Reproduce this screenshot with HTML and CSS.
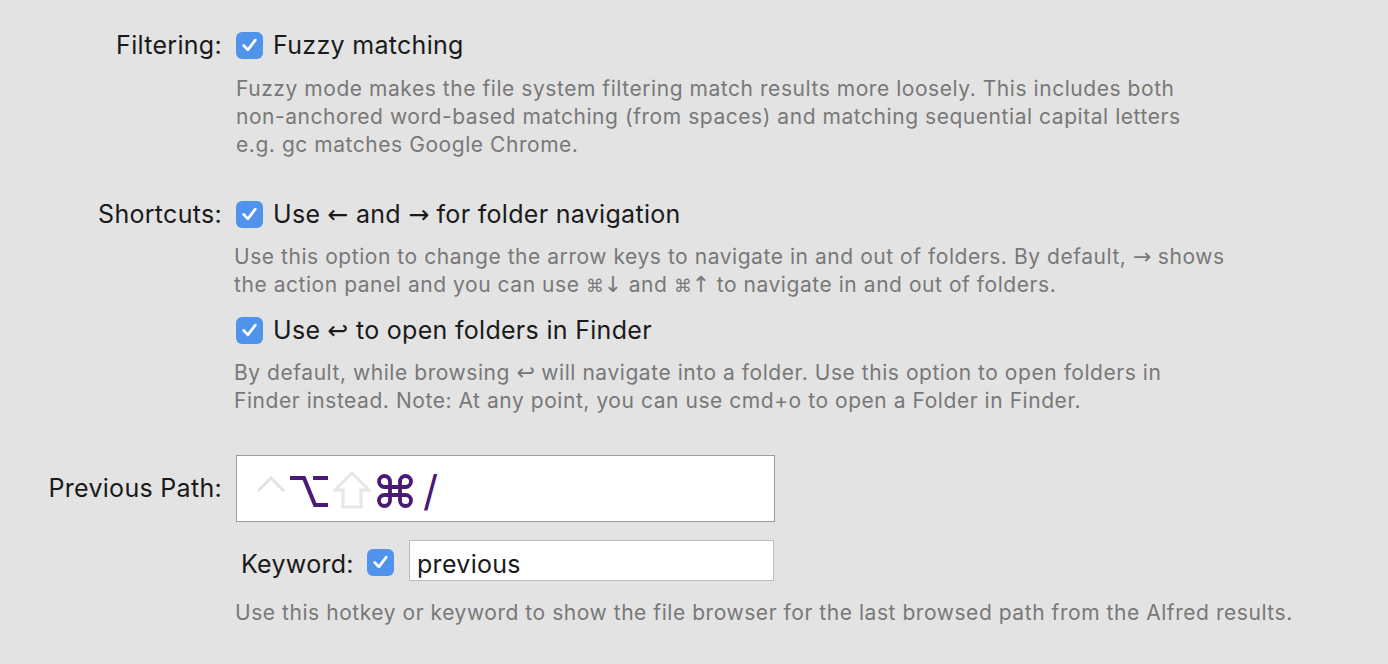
FILE: index.html
```html
<!DOCTYPE html>
<html>
<head>
<meta charset="utf-8">
<link rel="stylesheet" href="styles.css">
</head>
<body>
<div class="prefs">
  <div class="section s-filter">
    <div class="label">Filtering:</div>
    <div class="content">
      <div class="check-row">
        <span class="checkbox"><svg viewBox="0 0 28 28" width="28" height="28"><path d="M8 14.5 L12.3 19 L20 9" fill="none" stroke="#fff" stroke-width="2.8" stroke-linecap="round" stroke-linejoin="round"/></svg></span>
        <span class="check-text">Fuzzy matching</span>
      </div>
      <p class="desc d1">Fuzzy mode makes the file system filtering match results more loosely. This includes both<br>non-anchored word-based matching (from spaces) and matching sequential capital letters<br>e.g. gc matches Google Chrome.</p>
    </div>
  </div>

  <div class="section s-short">
    <div class="label">Shortcuts:</div>
    <div class="content">
      <div class="check-row">
        <span class="checkbox"><svg viewBox="0 0 28 28" width="28" height="28"><path d="M8 14.5 L12.3 19 L20 9" fill="none" stroke="#fff" stroke-width="2.8" stroke-linecap="round" stroke-linejoin="round"/></svg></span>
        <span class="check-text">Use <span class="arr">←</span> and <span class="arr">→</span> for folder navigation</span>
      </div>
      <p class="desc d2">Use this option to change the arrow keys to navigate in and out of folders. By default, <span class="arr">→</span> shows<br>the action panel and you can use <span class="cmd">⌘</span><span class="arr">↓</span> and <span class="cmd">⌘</span><span class="arr">↑</span> to navigate in and out of folders.</p>
      <div class="check-row r2">
        <span class="checkbox"><svg viewBox="0 0 28 28" width="28" height="28"><path d="M8 14.5 L12.3 19 L20 9" fill="none" stroke="#fff" stroke-width="2.8" stroke-linecap="round" stroke-linejoin="round"/></svg></span>
        <span class="check-text">Use <span class="arr">↩</span> to open folders in Finder</span>
      </div>
      <p class="desc d3">By default, while browsing <span class="arr">↩</span> will navigate into a folder. Use this option to open folders in<br>Finder instead. Note: At any point, you can use cmd+o to open a Folder in Finder.</p>
    </div>
  </div>

  <div class="section s-path">
    <div class="label path-label">Previous Path:</div>
    <div class="content">
      <div class="hotkey">
        <svg class="k k-ctrl" width="28" height="16" viewBox="0 0 28 16"><polyline points="1,15 14,2 27,15" fill="none" stroke="#e3e3e3" stroke-width="3"/></svg>
        <svg class="k k-opt" width="38" height="34" viewBox="0 0 38 34"><path d="M0,4 H14 L25,31 H38 M23,4 H38" fill="none" stroke="#4b1a76" stroke-width="4"/></svg>
        <svg class="k k-shift" width="38" height="38" viewBox="0 0 38 38"><polygon points="19,2 36,19 28,19 28,36 10,36 10,19 2,19" fill="none" stroke="#e6e6e6" stroke-width="3"/></svg>
        <svg class="k k-cmd" width="36" height="34" viewBox="0 0 36 34"><path d="M13,13 H23 V21 H13 Z M13,13 H7.5 A5.5,5.5 0 1 1 13,7.5 V13 M23,13 V7.5 A5.5,5.5 0 1 1 28.5,13 H23 M23,21 H28.5 A5.5,5.5 0 1 1 23,26.5 V21 M13,21 V26.5 A5.5,5.5 0 1 1 7.5,21 H13" fill="none" stroke="#4b1a76" stroke-width="3.8"/></svg>
        <span class="k k-slash">/</span>
      </div>
      <div class="kw-row">
        <span class="kw-label">Keyword:</span>
        <span class="checkbox"><svg viewBox="0 0 28 28" width="28" height="28"><path d="M8 14.5 L12.3 19 L20 9" fill="none" stroke="#fff" stroke-width="2.8" stroke-linecap="round" stroke-linejoin="round"/></svg></span>
        <div class="kw-input">previous</div>
      </div>
      <p class="desc d4">Use this hotkey or keyword to show the file browser for the last browsed path from the Alfred results.</p>
    </div>
  </div>
</div>
</body>
</html>
```

FILE: styles.css
```css
html, body {
  margin: 0;
  padding: 0;
  background: #e3e3e3;
}
body {
  font-family: "Inter", "Noto Sans", "DejaVu Sans", sans-serif;
  color: #1a1a1a;
  width: 1388px;
  height: 664px;
  overflow: hidden;
}
.prefs {
  padding-top: 31px;
  display: flex;
  flex-direction: column;
}
.section {
  display: flex;
  align-items: flex-start;
}
.label {
  width: 222px;
  text-align: right;
  font-size: 25px;
  letter-spacing: 0.3px;
  line-height: 28px;
  height: 28px;
  flex: none;
}
.content {
  margin-left: 14px;
  display: flex;
  flex-direction: column;
}
.check-row {
  display: flex;
  align-items: center;
  height: 28px;
}
.checkbox {
  width: 27px;
  height: 27px;
  border-radius: 6px;
  background: #4f93ed;
  display: inline-flex;
  align-items: center;
  justify-content: center;
  flex: none;
}
.checkbox svg {
  display: block;
}
.check-text {
  font-size: 25px;
  letter-spacing: 0.3px;
  line-height: 28px;
  margin-left: 10px;
  white-space: nowrap;
}
.arr {
  font-family: "DejaVu Sans", sans-serif;
  font-size: 1em;
  line-height: 0;
  letter-spacing: 0;
}
.desc .arr {
  font-size: 1.05em;
}
.cmd {
  font-family: "DejaVu Sans", sans-serif;
  font-size: 0.85em;
  line-height: 0;
  letter-spacing: 0;
}
.desc {
  margin: 0;
  color: #787878;
  font-size: 21px;
  letter-spacing: 0.55px;
  line-height: 28px;
  white-space: nowrap;
}
.d1 { margin-top: 16px; }
.s-short { margin-top: 41px; }
.d2 { margin-top: 15px; margin-left: -2px; }
.r2 { margin-top: 17px; }
.d3 { margin-top: 15px; margin-left: -2px; }
.s-path { margin-top: 40px; }
.path-label {
  margin-top: 19px;
}
.hotkey {
  width: 539px;
  height: 67px;
  box-sizing: border-box;
  border: 1px solid #9c9c9c;
  background: #fff;
  display: flex;
  align-items: flex-start;
  padding-left: 20px;
}
.k { display: block; flex: none; }
.k-ctrl { margin-top: 20px; }
.k-opt { margin-top: 18px; margin-left: 5px; }
.k-shift { margin-top: 15px; margin-left: 5px; }
.k-cmd { margin-top: 18px; margin-left: 6px; }
.k-slash {
  margin-left: 10px;
  margin-top: 12px;
  font-size: 42px;
  line-height: 46px;
  color: #4b1a76;
}
.kw-row {
  margin-top: 18px;
  display: flex;
  align-items: center;
  height: 41px;
}
.kw-label {
  font-size: 25px;
  letter-spacing: 0.3px;
  margin-left: 5px;
  width: 126px;
  padding-top: 7px;
}
.kw-row .checkbox {
  margin-right: 15px;
  margin-top: 3px;
}
.kw-input {
  width: 365px;
  height: 41px;
  box-sizing: border-box;
  border: 1px solid #bdbdbd;
  background: #fff;
  font-size: 25px;
  letter-spacing: 0.3px;
  line-height: 39px;
  padding-left: 7px;
  padding-top: 4px;
}
.d4 {
  margin-top: 18px;
  margin-left: -1px;
}
```
